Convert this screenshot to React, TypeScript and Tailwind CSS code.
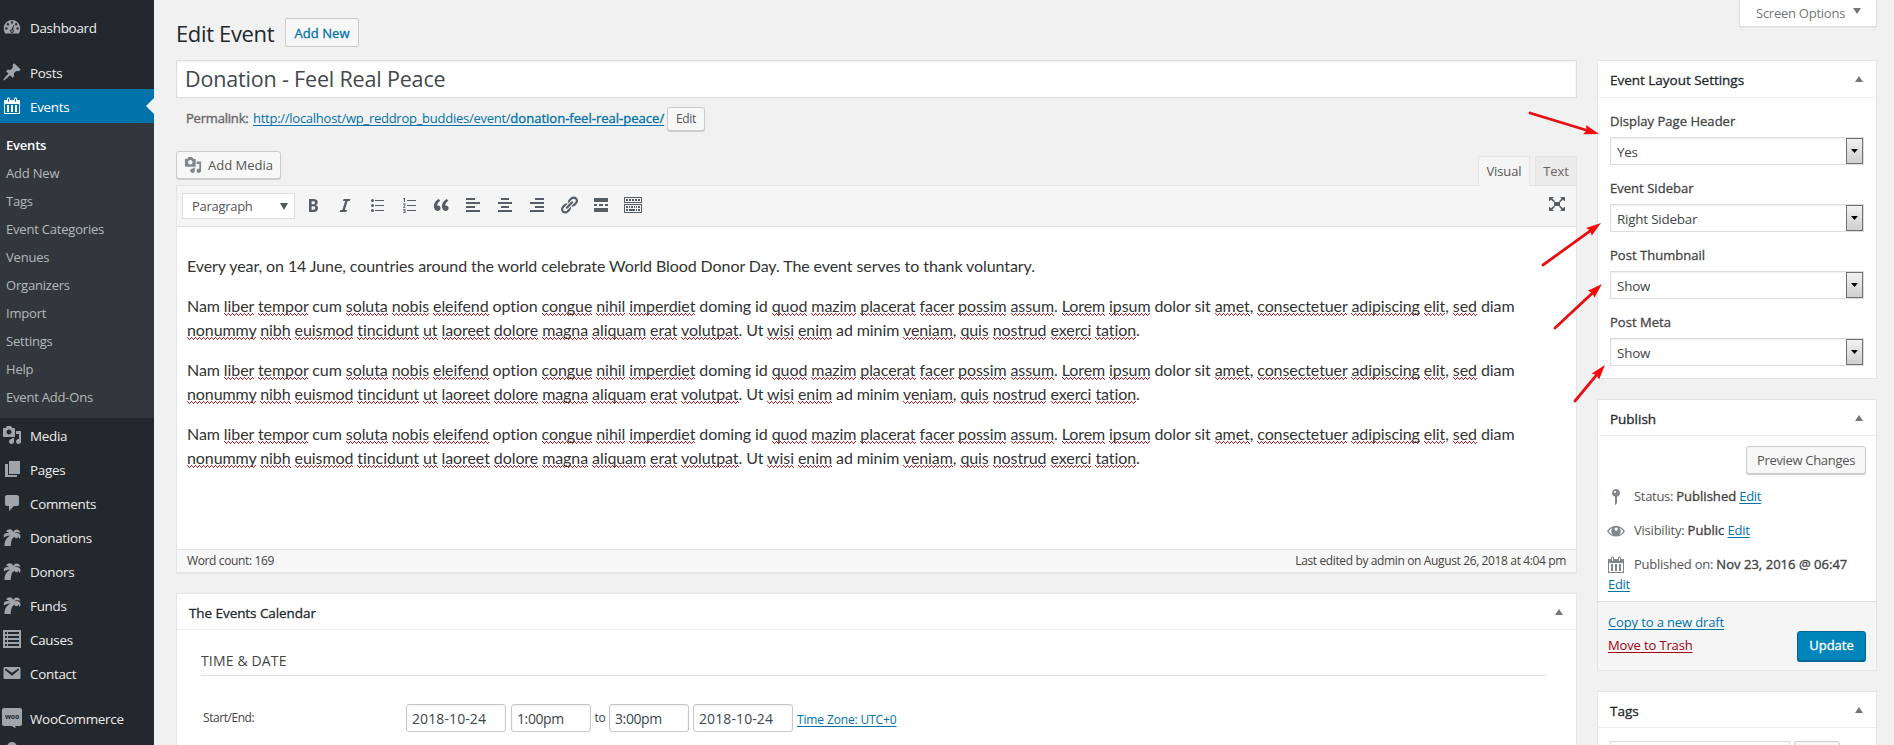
import type { ReactNode } from "react";

const ICONS: Record<string, ReactNode> = {
  dashboard: (
    <>
      <path fillRule="evenodd" d="M3.2 16.5C2.2 15 1.8 13.3 1.8 11.5 1.8 6.6 5.5 3 10 3s8.2 3.600 8.200 8.500c0 1.800-.4 3.500-1.400 5zM10 4.200a1.200 1.200 0 1 0 0 2.400 1.200 1.200 0 0 0 0-2.400zM5.900 6.100a1.200 1.200 0 1 0 0 2.400 1.200 1.200 0 0 0 0-2.400zM14.100 6.100a1.200 1.200 0 1 0 0 2.400 1.200 1.200 0 0 0 0-2.400zM4.400 10.300a1.200 1.200 0 1 0 0 2.400 1.200 1.200 0 0 0 0-2.400zM15.600 10.300a1.200 1.200 0 1 0 0 2.400 1.200 1.200 0 0 0 0-2.400zM11.400 7.800l-1.600 4.400c-1 .1-1.700 1-1.700 1.900 0 1 .8 1.900 1.900 1.900 1.100 0 1.900-.9 1.900-1.900 0-.5-.2-1-.6-1.400l.6-4.800z" />
      <circle cx="10" cy="14.100" r=".9" />
    </>
  ),
  pin: <path d="M10.440 3.020l1.820-1.820 6.360 6.350-1.830 1.820c-1.050-.68-2.480-.57-3.410.36l-.75.75c-.92.93-1.040 2.350-.35 3.410l-1.830 1.820-2.410-2.410-2.800 2.790c-.42.42-3.380 2.710-3.800 2.290s1.860-3.390 2.280-3.810l2.790-2.790L4.100 9.360l1.830-1.820c1.050.69 2.480.57 3.400-.36l.75-.75c.93-.92 1.050-2.350.36-3.410z" />,
  calendar: <path d="M15 4h3v14H2V4h3V3c0-.83.67-1.500 1.500-1.500S8 2.170 8 3v1h4V3c0-.83.67-1.500 1.500-1.500S15 2.170 15 3v1zM6 3v2.500c0 .28.22.5.5.5s.5-.22.5-.5V3c0-.28-.22-.5-.5-.5S6 2.720 6 3zm7 0v2.500c0 .28.22.5.5.5s.5-.22.5-.5V3c0-.28-.22-.5-.5-.5s-.5.22-.5.5zm4 14V8H3v9h14zM7 16V9H5v7h2zm4 0V9H9v7h2zm4 0V9h-2v7h2z" />,
  media: <path d="M13 11V4c0-.55-.45-1-1-1h-1.670L9 1H5L3.670 3H2c-.55 0-1 .45-1 1v7c0 .55.45 1 1 1h10c.55 0 1-.45 1-1zM7 4.500c1.380 0 2.500 1.120 2.500 2.500S8.380 9.500 7 9.500 4.500 8.380 4.500 7 5.620 4.500 7 4.500zM14 6h5v10.500c0 1.380-1.120 2.500-2.500 2.500S14 17.880 14 16.500s1.120-2.500 2.500-2.500c.17 0 .34.02.5.05V9h-3V6zm-4 8.050V13h2v3.500c0 1.380-1.120 2.500-2.500 2.500S7 17.880 7 16.500 8.120 14 9.500 14c.17 0 .34.02.5.05z" />,
  page: <path d="M7 15V2h11v13H7zm-1 1h9v2H3V5h3v11z" />,
  comment: <path d="M5 2h9.500c1.400 0 2.500.9 2.500 2v7c0 1.100-.9 2-2 2h-3l-5 5v-5H5c-1.100 0-2-.9-2-2V4c0-1.100.9-2 2-2z" />,
  palm: (
    <path d="M8.600 2.400c1.500.2 2.200 1.300 2.500 2.600.8-1.300 2-2.400 3.400-2.400 1.800 0 3.200 1 4 3.200-1.200-.5-2.500-.7-3.600-.5-1 .1-1.900.4-2.600.9 2.400-.6 5 0 5.900 1.700.7 1.300.2 3.300-1 4.200-.1-.9-.4-1.800-.9-2.500-.2 1-.9 1.700-1.800 1.700s-1.600-.7-1.700-1.600c-2.500.8-4 3.800-4 9.300H2.500c-.2-5 2.200-8.700 5.700-10.300-2.400-.3-4.400.3-6.200 1.800-.8-2.500.2-4.500 3-4.600.9 0 1.600.1 2.300.4-.9-1-2-1.600-3.300-1.800 1.200-1.800 2.900-2.400 4.600-2.100z" />
  ),
  list: <path fillRule="evenodd" d="M1 1h18v18H1zM3 3v2h2V3zm3 0v2h11V3zM3 7v2h2V7zm3 0v2h11V7zm-3 4v2h2v-2zm3 0v2h11v-2zm-3 4v2h2v-2zm3 0v2h11v-2z" />,
  email: (
    <path fillRule="evenodd" d="M3 4h14c1 0 1.500.5 1.500 1.500v9c0 1-.5 1.500-1.500 1.500H3c-1 0-1.500-.5-1.500-1.500v-9C1.500 4.500 2 4 3 4zM3.700 5.600l-.9 1.200L10 12.700l7.200-5.900-.9-1.200L10 9.800z" />
  ),
  bold: <path d="M6 4v13h4.540c1.370 0 2.460-.33 3.260-1 .8-.66 1.200-1.580 1.200-2.770 0-.84-.17-1.510-.51-2.010s-.9-.85-1.670-1.030v-.09c.57-.1 1.020-.4 1.360-.9s.51-1.130.51-1.910c0-1.140-.39-1.980-1.170-2.500C12.750 4.260 11.500 4 9.780 4H6zm2.570 5.150V6.260h1.360c.73 0 1.270.11 1.610.32.34.22.51.58.51 1.070 0 .54-.16.92-.47 1.150s-.82.35-1.510.35h-1.500zm0 2.190h1.600c1.440 0 2.160.53 2.160 1.610 0 .6-.17 1.050-.51 1.340s-.86.43-1.570.43H8.570v-3.380z" />,
  italic: <path d="M14.780 6h-2.130l-2.800 9h2.120l-.62 2H4.600l.62-2h2.140l2.800-9H8.030l.62-2h6.750z" />,
  ul: <path d="M5.500 7a1.500 1.500 0 1 1 0-3 1.500 1.500 0 0 1 0 3zM8 5h9v1H8zM5.500 12a1.500 1.500 0 1 1 0-3 1.500 1.500 0 0 1 0 3zM8 10h9v1H8zM5.500 17a1.500 1.500 0 1 1 0-3 1.500 1.500 0 0 1 0 3zM8 15h9v1H8z" />,
  ol: <path d="M8 5h9v1H8zM8 10h9v1H8zM8 15h9v1H8zM5 3h1v4H5V4.200H4V3.400zM4 8.500h2.500v2L5.200 12h1.300v.8H4V12l1.600-1.600v-1H4zM4 14h2.500v4H4v-.8h1.500v-.9H4.500v-.7h1v-.8H4z" />,
  quote: <path d="M9.490 13.220c0-.74-.2-1.380-.61-1.900-.62-.78-1.830-.88-2.530-.72-.29-1.650 1.110-3.750 2.920-4.650L7.880 4c-2.730 1.300-5.420 4.280-4.960 8.050C3.210 14.430 4.590 16 6.540 16c.85 0 1.560-.25 2.120-.75s.83-1.180.83-2.030zm8.050 0c0-.74-.2-1.380-.61-1.900-.63-.78-1.830-.88-2.530-.72-.29-1.650 1.110-3.750 2.920-4.650L15.930 4c-2.730 1.300-5.410 4.280-4.950 8.050.29 2.380 1.660 3.950 3.610 3.950.85 0 1.560-.25 2.120-.75s.83-1.180.83-2.030z" />,
  left: <path d="M12 5V3H3v2h9zm5 4V7H3v2h14zm-5 4v-2H3v2h9zm5 4v-2H3v2h14z" />,
  center: <path d="M14 5V3H6v2h8zm3 4V7H3v2h14zm-3 4v-2H6v2h8zm3 4v-2H3v2h14z" />,
  right: <path d="M17 5V3H8v2h9zm0 4V7H3v2h14zm0 4v-2H8v2h9zm0 4v-2H3v2h14z" />,
  link: <path d="M17.740 2.760c1.680 1.690 1.680 4.410 0 6.100l-1.530 1.520c-1.120 1.120-2.700 1.470-4.140 1.090l2.620-2.610.76-.77.76-.76c.84-.84.84-2.200 0-3.040-.84-.85-2.200-.85-3.040 0l-.77.76-3.380 3.380c-.37-1.440-.02-3.020 1.100-4.140l1.520-1.530c1.690-1.680 4.420-1.680 6.100 0zM8.590 13.430l5.340-5.340c.42-.42.42-1.100 0-1.520-.44-.43-1.130-.39-1.530 0l-5.330 5.340c-.42.42-.42 1.100 0 1.520.44.43 1.130.39 1.520 0zm-.76 2.290l4.140-4.150c.38 1.440.03 3.020-1.090 4.140l-1.520 1.530c-1.690 1.680-4.410 1.680-6.100 0-1.680-1.680-1.680-4.420 0-6.100l1.530-1.520c1.120-1.120 2.700-1.470 4.140-1.100l-4.140 4.150c-.85.84-.85 2.200 0 3.050.84.84 2.200.84 3.040 0z" />,
  more: <path d="M17 7V3H3v4h14zM6 11V9H3v2h3zm6 0V9H8v2h4zm5 0V9h-3v2h3zm0 6v-4H3v4h14z" />,
  sink: <path fillRule="evenodd" d="M1 2h18v6H1zM2 3v4h16V3zM1 9h18v9H1zM2 10v7h16v-7zM3 4h2v2H3zM6 4h2v2H6zM9 4h2v2H9zM12 4h2v2h-2zM15 4h2v2h-2zM3 11h2v2H3zM6 11h1v2H6zM8 11h2v2H8zM11 11h1v2h-1zM13 11h1v2h-1zM15 11h2v2h-2zM3 14h2v2H3zM6 14h6v2H6zM13 14h1v2h-1zM15 14h2v2h-2z" />,
  expand: <path d="M7 8h6v4H7zM2 3h5L5.400 4.600 8 7.200 6.900 8.200 4 5.700 2 7.500zM18 3h-5l1.600 1.600L12 7.200l1.100 1L16 5.700l2 1.800zM2 17h5l-1.600-1.600L8 12.800l-1.100-1L4 14.300l-2-1.800zM18 17h-5l1.600-1.600-2.600-2.600 1.100-1 2.900 2.500 2-1.800z" />,
  status: <path d="M14 6c0 1.860-1.280 3.410-3 3.860V16c0 1-2 2-2 2V9.860c-1.720-.45-3-2-3-3.860 0-2.210 1.790-4 4-4s4 1.790 4 4zM8 5c0 .55.450 1 1 1s1-.45 1-1-.45-1-1-1-1 .45-1 1z" />,
  eye: <path fillRule="evenodd" d="M1 10.200C3 7 6.300 4.800 10 4.800s7 2.200 9 5.400c-2 3.200-5.300 5.400-9 5.400s-7-2.200-9-5.400zm1.700 0c1 1.600 2.500 2.900 4.300 3.600a4.600 4.600 0 0 1-.3-7.100c-1.600.7-3 2-4 3.500zm14.600 0c-1-1.500-2.400-2.800-4-3.500a4.600 4.600 0 0 1-.3 7.100c1.800-.7 3.300-2 4.300-3.600zM10.300 6.500c-1 0-1.800.8-1.800 1.800 0 .3.100.6.200.8a1.700 1.700 0 0 0 2.900 0 1.800 1.800 0 0 0-1.300-2.600z" />,
};

function Icon({ name, className = "" }: { name: string; className?: string }) {
  return (
    <svg viewBox="0 0 20 20" className={`size-5 shrink-0 fill-current ${className}`}>
      {ICONS[name]}
    </svg>
  );
}

function MenuItem({ icon, label, active }: { icon: string; label: string; active?: boolean }) {
  return (
    <div className={`relative flex h-[34px] shrink-0 items-center gap-2 pl-0.5 text-[13.4px] tracking-[-0.27px] ${active ? "bg-[#0073aa] text-white" : "text-[#eee]"}`}>
      <Icon name={icon} className={active ? "text-white" : "text-[#a0a5aa]"} />
      <span className="pt-0.5">{label}</span>
      {active && (
        <svg viewBox="0 0 8 16" className="absolute top-[9px] right-0 h-4 w-2 fill-[#f1f1f1]">
          <path d="M8 0v16L0 8z" />
        </svg>
      )}
    </div>
  );
}

function WooIcon() {
  return (
    <span className="relative flex size-5 shrink-0 items-start">
      <svg viewBox="0 0 20 20" className="absolute inset-0 size-5 fill-[#a0a5aa]">
        <path d="M2 0h16a2 2 0 0 1 2 2v14a2 2 0 0 1-2 2h-5l1 2.500L9.500 18H2a2 2 0 0 1-2-2V2a2 2 0 0 1 2-2z" />
      </svg>
      <span className="relative w-5 text-center text-[7px] leading-[17px] font-bold tracking-[-0.2px] text-[#23282d]">woo</span>
    </span>
  );
}

const SUBMENU = ["Add New", "Tags", "Event Categories", "Venues", "Organizers", "Import", "Settings", "Help", "Event Add-Ons"];

function Sidebar() {
  return (
    <nav className="flex h-full w-[154px] shrink-0 flex-col bg-[#23282d] pt-2.5">
      <MenuItem icon="dashboard" label="Dashboard" />
      <div className="h-[11px] shrink-0" />
      <MenuItem icon="pin" label="Posts" />
      <MenuItem icon="calendar" label="Events" active />
      <div className="flex h-[295px] shrink-0 flex-col bg-[#32373c] pt-2 pl-1.5 text-[13px] leading-7 tracking-[-0.2px] text-[#b4b9be]">
        <span className="h-7 font-semibold text-white">Events</span>
        {SUBMENU.map((s) => (
          <span key={s} className="h-7">{s}</span>
        ))}
      </div>
      <MenuItem icon="media" label="Media" />
      <MenuItem icon="page" label="Pages" />
      <MenuItem icon="comment" label="Comments" />
      <MenuItem icon="palm" label="Donations" />
      <MenuItem icon="palm" label="Donors" />
      <MenuItem icon="palm" label="Funds" />
      <MenuItem icon="list" label="Causes" />
      <MenuItem icon="email" label="Contact" />
      <div className="h-[11px] shrink-0" />
      <div className="flex h-[34px] shrink-0 items-center gap-2 pl-0.5 text-[13.4px] tracking-[-0.27px] text-[#eee]">
        <WooIcon />
        <span className="pt-0.5">WooCommerce</span>
      </div>
      <svg viewBox="0 0 20 20" className="mt-[7px] ml-0.5 size-5 shrink-0 fill-[#a0a5aa]">
        <circle cx="10" cy="5" r="5" />
      </svg>
    </nav>
  );
}

function Up() {
  return (
    <svg viewBox="0 0 8 6" className="h-1.5 w-2 fill-[#72777c]">
      <path d="M4 0l4 6H0z" />
    </svg>
  );
}

function PanelHead({ title, className = "" }: { title: string; className?: string }) {
  return (
    <div className={`flex items-center justify-between border-b border-[#eee] pr-[13px] pl-3 text-[13.500px] text-[#23282d] [-webkit-text-stroke:0.3px_#23282d] ${className}`}>
      <span className="pt-[3px]">{title}</span>
      <Up />
    </div>
  );
}

const WORDS =
  "Nam *liber *tempor cum *soluta *nobis *eleifend option *congue *nihil *imperdiet doming id *quod *mazim *placerat *facer *possim *assum. *Lorem *ipsum dolor sit *amet, *consectetuer *adipiscing *elit, *sed diam *nonummy *nibh *euismod *tincidunt *ut *laoreet *dolore *magna *aliquam *erat *volutpat. Ut *wisi *enim ad minim *veniam, *quis *nostrud *exerci *tation.".split(" ");

/* Three stacked one-pixel rows form the spell-check zigzag. */
const SQUIGGLE =
  "pb-px bg-repeat-x bg-[linear-gradient(to_right,#b81c22_1px,transparent_1px),linear-gradient(to_right,transparent_1px,#b81c22_1px,#b81c22_2px,transparent_2px,transparent_3px,#b81c22_3px),linear-gradient(to_right,transparent_2px,#b81c22_2px,#b81c22_3px,transparent_3px)] [background-position:0_calc(100%_-_2px),0_calc(100%_-_1px),0_100%] [background-size:4px_1px]";

function Lorem() {
  return (
    <p className="mb-4 w-[1340px]">
      {WORDS.map((w, i) => {
        if (!w.startsWith("*")) return <span key={i}>{w} </span>;
        const m = w.slice(1).match(/^(\w+)(.*)$/)!;
        return (
          <span key={i}>
            <span className={SQUIGGLE}>{m[1]}</span>
            {m[2]}{" "}
          </span>
        );
      })}
    </p>
  );
}

const TOOLS = ["bold", "italic", "ul", "ol", "quote", "left", "center", "right", "link", "more", "sink"];

function Select({ label, value }: { label: string; value: string }) {
  return (
    <div className="flex h-[67px] flex-col">
      <span className="h-[29px] pt-[3px] text-[13px] leading-5 tracking-[0.03px] text-[#444] [-webkit-text-stroke:0.3px_#444]">{label}</span>
      <div className="flex h-7 items-stretch justify-between border border-[#ddd] bg-white pl-1.5 shadow-[inset_0_1px_2px_rgba(0,0,0,0.07)]">
        <span className="pt-1 text-[13.4px] tracking-[-0.2px] text-[#40464c]">{value}</span>
        <span className="flex w-[17px] items-center justify-center border border-[#707070] bg-gradient-to-b from-[#f2f2f2] to-[#cfcfcf]">
          <svg viewBox="0 0 7 4" className="h-1 w-[7px] fill-black"><path d="M0 0h7L3.500 4z" /></svg>
        </span>
      </div>
    </div>
  );
}

const Link = ({ children, className = "" }: { children: ReactNode; className?: string }) => (
  <a className={`text-[#0073aa] underline underline-offset-2 [text-decoration-skip-ink:none] ${className}`}>{children}</a>
);

const Strong = ({ children }: { children: ReactNode }) => (
  <span className="tracking-[0.03px] text-[#444] [-webkit-text-stroke:0.35px_#444]">{children}</span>
);

function Field({ value, className }: { value: string; className: string }) {
  return (
    <span className={`h-7 rounded-[3px] border border-[#c8c8c8] bg-white pl-[5px] text-[14px] leading-7 text-[#40464c] shadow-[inset_0_1px_2px_rgba(0,0,0,0.07)] ${className}`}>
      {value}
    </span>
  );
}

const ARROWS = [
  [1530, 113, 1599, 134],
  [1543, 265, 1601, 223],
  [1555, 328, 1602, 284],
  [1575, 401, 1605, 365],
];

function Arrows() {
  return (
    <svg viewBox="0 0 1894 745" className="pointer-events-none absolute inset-0 h-[745px] w-[1894px]">
      {ARROWS.map(([x1, y1, x2, y2], i) => {
        const len = Math.hypot(x2 - x1, y2 - y1);
        const deg = (Math.atan2(y2 - y1, x2 - x1) * 180) / Math.PI;
        return (
          <g key={i} transform={`translate(${x1} ${y1}) rotate(${deg})`}>
            <line x1="0" y1="0" x2={len - 12} y2="0" stroke="#e60f14" strokeWidth="2.800" strokeLinecap="round" />
            <path d={`M${len} 0L${len - 15} -4.800L${len - 13} 0L${len - 15} 4.800z`} fill="#fa0a0a" />
          </g>
        );
      })}
    </svg>
  );
}

export default function App() {
  return (
    <div className="relative flex h-[745px] w-[1894px] overflow-hidden bg-[#f1f1f1] font-['Open_Sans','Noto_Sans',sans-serif] text-[13px] whitespace-nowrap text-[#444]">
      <Sidebar />
      <div className="flex flex-1 flex-col pr-[17px] pl-[22px]">
        <header className="flex h-[60px] shrink-0 items-start justify-between">
          <div className="flex items-start gap-2.5 pt-[18px]">
            <h1 className="w-[99px] text-[22px] leading-[30px] tracking-[-0.35px] text-[#23282d]">Edit Event</h1>
            <span className="flex h-[29px] w-[74px] items-center justify-center rounded-[2px] border border-[#ccc] bg-[#f7f7f7] pt-0.5 tracking-[0.05px] text-[#0073aa] [-webkit-text-stroke:0.3px_#0073aa]">Add New</span>
          </div>
          <div className="flex h-[27px] w-[138px] items-center gap-2 border border-t-0 border-[#ddd] bg-white pl-4 tracking-[-0.25px] text-[#72777c] shadow-[0_1px_1px_rgba(0,0,0,0.04)]">
            <span className="pt-0.5">Screen Options</span>
            <svg viewBox="0 0 8 6" className="-mt-1 h-1.5 w-2 fill-[#72777c]"><path d="M0 0h8L4 6z" /></svg>
          </div>
        </header>

        <div className="flex gap-5">
          <main className="flex w-[1401px] shrink-0 flex-col">
            <div className="flex h-[38px] items-center border border-[#ddd] bg-white pt-px pl-2 text-[21.500px] tracking-[-0.17px] text-[#42484e] shadow-[inset_0_1px_2px_rgba(0,0,0,0.07)]">
              Donation - Feel Real Peace
            </div>
            <div className="flex h-[41px] items-center pl-2.5">
              <span className="w-[67px] tracking-[-0.2px] text-[#666] [-webkit-text-stroke:0.35px_#666]">Permalink:</span>
              <Link className="w-[414px] tracking-[-0.26px]">
                http://localhost/wp_reddrop_buddies/event/<span className="tracking-[0.02px] [-webkit-text-stroke:0.35px_#0073aa]">donation-feel-real-peace/</span>
              </Link>
              <span className="flex h-6 w-[38px] items-center justify-center rounded-[3px] border border-[#ccc] bg-[#f7f7f7] text-[12px] tracking-[-0.3px] text-[#555] shadow-[0_1px_0_#ccc]">Edit</span>
            </div>
            <div className="flex h-[46px] items-end justify-between">
              <span className="mb-1.5 flex h-7 w-[105px] items-center gap-1.5 rounded-[3px] border border-[#ccc] bg-[#f7f7f7] pl-[7px] text-[#555] shadow-[0_1px_0_#ccc]">
                <Icon name="media" className="!size-[18px] text-[#82878c]" />
                <span className="pt-0.5">Add Media</span>
              </span>
              <div className="flex gap-[5px] tracking-[-0.1px]">
                <span className="z-10 -mb-px flex h-[30px] w-[52px] items-center justify-center border border-b-0 border-[#e5e5e5] bg-[#f5f5f5] pt-px text-[#555]">Visual</span>
                <span className="flex h-[29px] w-[42px] items-center justify-center border border-b-0 border-[#e5e5e5] bg-[#ebebeb] pt-px text-[#666]">Text</span>
              </div>
            </div>
            <div className="flex h-[388px] flex-col border border-[#e5e5e5] bg-white shadow-[0_1px_1px_rgba(0,0,0,0.04)]">
              <div className="flex h-[41px] shrink-0 items-center border-b border-[#ddd] bg-[#f5f5f5] pl-[5px]">
                <span className="mr-2 flex h-[26px] w-[113px] items-center justify-between border border-[#ddd] bg-white pr-1.5 pl-[9px] tracking-[-0.29px] text-[#555]">
                  <span className="pt-0.5">Paragraph</span>
                  <svg viewBox="0 0 8 7" className="h-[7px] w-2 fill-[#50575e]"><path d="M0 0h8L4 7z" /></svg>
                </span>
                <div className="flex flex-1 gap-3 pb-0.5 text-[#555d66]">
                  {TOOLS.map((t) => <Icon key={t} name={t} />)}
                </div>
                <Icon name="expand" className="mr-[9px] mb-1 text-[#555d66]" />
              </div>
              <div className="h-[322px] shrink-0 pt-[27px] pl-2.5 font-['Lato',sans-serif] text-[16px] leading-6 tracking-[-0.085px] whitespace-normal text-[#333]">
                <p className="mb-4">Every year, on 14 June, countries around the world celebrate World Blood Donor Day. The event serves to thank voluntary.</p>
                <Lorem />
                <Lorem />
                <Lorem />
              </div>
              <div className="flex flex-1 items-center justify-between border-t border-[#e5e5e5] bg-[#f7f7f7] px-2.5 text-[12px] tracking-[-0.37px] text-[#444]">
                <span>Word count: 169</span>
                <span>Last edited by admin on August 26, 2018 at 4:04 pm</span>
              </div>
            </div>

            <section className="mt-5 h-[200px] border border-[#e5e5e5] bg-white">
              <PanelHead title="The Events Calendar" className="h-9 tracking-[-0.07px]" />
              <div className="pr-[30px] pl-6">
                <h3 className="flex h-[46px] items-end border-b border-[#e1e1e1] pb-1 text-[14px] leading-5 tracking-[0.15px] text-[#444]">TIME &amp; DATE</h3>
                <div className="mt-7 flex h-7 items-center">
                  <span className="w-[205px] pl-0.5 text-[12px] tracking-[-0.45px]">Start/End:</span>
                  <Field value="2018-10-24" className="mr-[5px] w-[100px] tracking-[0.1px]" />
                  <Field value="1:00pm" className="w-20 tracking-[-0.4px]" />
                  <span className="w-[18px] text-center text-[12px] tracking-[-0.3px]">to</span>
                  <Field value="3:00pm" className="mr-[4px] w-20 tracking-[-0.4px]" />
                  <Field value="2018-10-24" className="mr-1 w-[100px] tracking-[0.1px]" />
                  <Link className="pt-[3px] text-[12px] tracking-[-0.14px]">Time Zone: UTC+0</Link>
                </div>
              </div>
            </section>
          </main>

          <aside className="flex w-[280px] shrink-0 flex-col gap-5">
            <section className="h-[319px] border border-[#e5e5e5] bg-white">
              <PanelHead title="Event Layout Settings" className="h-[37px] tracking-[-0.02px]" />
              <div className="px-3 pt-[10px]">
                <Select label="Display Page Header" value="Yes" />
                <Select label="Event Sidebar" value="Right Sidebar" />
                <Select label="Post Thumbnail" value="Show" />
                <Select label="Post Meta" value="Show" />
              </div>
            </section>

            <section className="h-[272px] border border-[#e5e5e5] bg-white">
              <PanelHead title="Publish" className="h-9 tracking-[-0.02px]" />
              <div className="flex h-[165px] flex-col px-2.5 pt-2.5 text-[#555]">
                <span className="mb-1.5 ml-auto flex h-7 w-[120px] shrink-0 items-center justify-center rounded-[3px] border border-[#ccc] bg-[#f7f7f7] pt-0.5 tracking-[-0.32px] shadow-[0_1px_0_#ccc]">Preview Changes</span>
                <div className="flex h-[34px] shrink-0 items-center">
                  <Icon name="status" className="mr-2 -ml-0.5 text-[#82878c]" />
                  <span className="tracking-[-0.3px]">Status: <Strong>Published</Strong> <Link>Edit</Link></span>
                </div>
                <div className="flex h-[34px] shrink-0 items-center">
                  <Icon name="eye" className="mr-2 -ml-0.5 text-[#82878c]" />
                  <span className="tracking-[-0.22px]">Visibility: <Strong>Public</Strong> <Link>Edit</Link></span>
                </div>
                <div className="flex h-[34px] shrink-0 items-center">
                  <Icon name="calendar" className="mr-2 -ml-0.5 text-[#82878c]" />
                  <span className="tracking-[-0.24px]">Published on: <Strong>Nov 23, 2016 @ 06:47</Strong></span>
                </div>
                <Link className="-mt-[7px] tracking-[-0.3px]">Edit</Link>
              </div>
              <div className="flex h-[69px] justify-between border-t border-[#ddd] bg-[#f5f5f5] px-2.5">
                <div className="flex flex-col pt-[9px] leading-[23px]">
                  <Link className="tracking-[-0.13px]">Copy to a new draft</Link>
                  <Link className="tracking-[-0.14px] text-[#a0000f]!">Move to Trash</Link>
                </div>
                <span className="mt-[29px] flex h-[30px] w-[69px] items-center justify-center rounded-[3px] border border-[#006799] bg-[#0085ba] text-white shadow-[0_1px_0_#006799] [-webkit-text-stroke:0.3px_#fff]">Update</span>
              </div>
            </section>

            <section className="h-[100px] border border-[#e5e5e5] bg-white">
              <PanelHead title="Tags" className="h-9 tracking-[-0.02px]" />
              <div className="flex gap-1 px-3 pt-[13px]">
                <span className="h-7 w-[180px] border border-[#ddd]" />
                <span className="h-7 w-[46px] rounded-[3px] border border-[#ccc] bg-[#f7f7f7]" />
              </div>
            </section>
          </aside>
        </div>
      </div>
      <Arrows />
    </div>
  );
}
